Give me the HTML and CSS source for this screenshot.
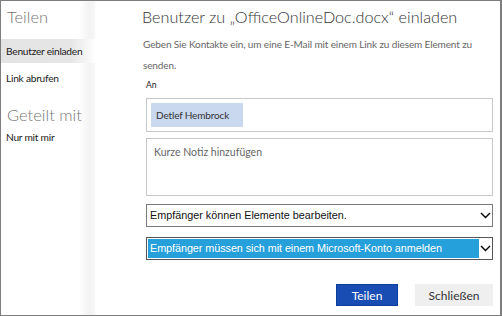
FILE: index.html
```html
<!DOCTYPE html>
<html lang="de">
<head>
<meta charset="utf-8">
<link rel="stylesheet" href="styles.css">
</head>
<body>
<div class="window">
  <aside class="sidebar">
    <h2 class="side-title">Teilen</h2>
    <div class="side-item active">Benutzer einladen</div>
    <div class="side-item link">Link abrufen</div>
    <h2 class="side-title shared">Geteilt mit</h2>
    <div class="side-item">Nur mit mir</div>
  </aside>
  <main class="main">
    <h1 class="title">Benutzer zu „OfficeOnlineDoc.docx“ einladen</h1>
    <p class="desc">Geben Sie Kontakte ein, um eine E-Mail mit einem Link zu diesem Element zu senden.</p>
    <div class="to">An</div>
    <div class="recipients"><span class="token">Detlef Hembrock</span></div>
    <div class="note">Kurze Notiz hinzufügen</div>
    <div class="dropdown">
      <span class="dd-text">Empfänger können Elemente bearbeiten.</span>
      <span class="dd-arrow"><svg width="11" height="7" viewBox="0 0 11 7"><polyline points="1,1 5.5,5.5 10,1" fill="none" stroke="#000" stroke-width="1.4"/></svg></span>
    </div>
    <div class="dropdown focused">
      <span class="dd-text">Empfänger müssen sich mit einem Microsoft-Konto anmelden</span>
      <span class="dd-arrow"><svg width="11" height="7" viewBox="0 0 11 7"><polyline points="1,1 5.5,5.5 10,1" fill="none" stroke="#000" stroke-width="1.4"/></svg></span>
    </div>
    <div class="actions">
      <button class="btn primary">Teilen</button>
      <button class="btn secondary">Schließen</button>
    </div>
  </main>
</div>
</body>
</html>
```
FILE: styles.css
```css
* { box-sizing: border-box; }
html, body { margin: 0; padding: 0; background: #fff; }
body { font-family: Lato, "Open Sans", sans-serif; color: #333; }
.window {
  width: 502px; height: 316px;
  border: 1px solid #7d7d7d;
  border-right-width: 2px;
  display: flex;
  overflow: hidden;
}
.sidebar {
  width: 95px; flex: none;
  background: linear-gradient(to right, #fff 0, #fff 78px, #f3f3f3 88px, #f5f5f5 93px, #fff 95px);
  padding-top: 4px;
}
.side-title {
  margin: 0; padding-left: 6px;
  font-weight: 300; font-size: 16.5px; line-height: 24px;
  color: #777;
}
.side-title.shared { margin-top: 15px; line-height: 20px; }
.side-item {
  font-size: 10.2px; line-height: 24px; color: #1a1a1a; letter-spacing: -0.25px;
  padding-left: 5px; white-space: nowrap;
}
.side-item.link { margin-top: 3px; }
.side-item.active {
  margin-top: 10px;
  background: linear-gradient(to right, #e4e4e4 0, #e6e6e6 70px, #fff 95px);
}
.main {
  flex: 1; padding: 4px 7px 0 50px;
  display: flex; flex-direction: column;
}
.title {
  margin: 0; font-weight: 300; font-size: 16.2px; line-height: 24px;
  color: #333; white-space: nowrap; margin-left: -4px;
}
.desc {
  margin: 5px 0 0 -3px; font-size: 10px; line-height: 21px; color: #666; letter-spacing: -0.12px;
}
.to { font-size: 8.5px; line-height: 12px; margin-top: 3px; color: #222; }
.recipients {
  margin-top: 7px; height: 34px;
  border: 1px solid #c6c6c6;
  padding: 4px;
}
.token {
  display: inline-block; height: 24px; line-height: 24px;
  width: 92px; padding-left: 5px; letter-spacing: -0.15px;
  background: #c9d8ef; font-size: 10px; color: #333;
}
.note {
  margin-top: 6px; height: 58px;
  border: 1px solid #c6c6c6;
  padding: 5px 7px; font-size: 10.5px; line-height: 16px; color: #666;
}
.dropdown {
  margin-top: 8px; height: 23px;
  border: 1px solid #7a7a7a;
  display: flex; align-items: stretch;
  font-family: "Liberation Sans", Arial, sans-serif; font-size: 10.8px; color: #111;
}
.dropdown + .dropdown { margin-top: 10px; border-color: #555; }
.dd-text { flex: 1; padding-left: 3px; line-height: 21px; white-space: nowrap; overflow: hidden; }
.dd-arrow { width: 13px; display: flex; align-items: center; justify-content: center; }
.dropdown.focused .dd-text { background: #26a0da; color: #fff; margin: 1px 0 1px 1px; line-height: 19px; padding-left: 2px; letter-spacing: -0.05px; }
.actions {
  margin-top: 24px; display: flex; justify-content: flex-end; gap: 17px;
}
.btn {
  height: 22px; font-family: Lato, "Open Sans", sans-serif; font-size: 12px; padding: 0;
}
.btn.primary { width: 62px; background: #1a4db3; border: 1px solid #0f3f9e; color: #fff; }
.btn.secondary { width: 78px; background: #efefef; border: none; color: #333; }
```
